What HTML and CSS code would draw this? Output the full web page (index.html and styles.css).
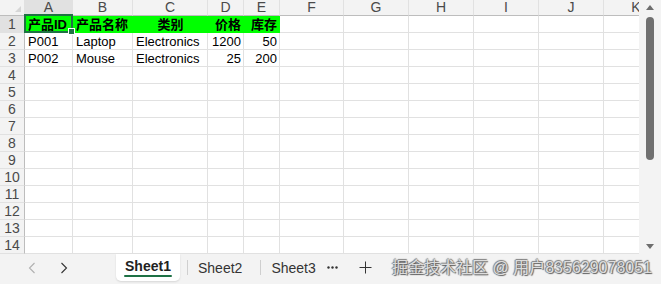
FILE: index.html
```html
<!DOCTYPE html>
<html lang="zh">
<head>
    <meta charset="UTF-8">
    <title>产品表 - Sheet1</title>
    <link rel="stylesheet" href="styles.css">
</head>
<body>
    <div class="app">
        <div class="main">
            <div class="grid-wrap">
                <table class="sheet">
                    <colgroup>
                        <col class="c-row"><col class="c-a"><col class="c-b"><col class="c-c"><col class="c-d"><col class="c-e"><col class="c-f"><col class="c-w"><col class="c-w"><col class="c-w"><col class="c-w"><col class="c-w">
                    </colgroup>
                    <thead>
                        <tr><th class="corner"><span class="corner-tri"></span></th><th class="sel">A</th><th>B</th><th>C</th><th>D</th><th>E</th><th>F</th><th>G</th><th>H</th><th>I</th><th>J</th><th>K</th></tr>
                    </thead>
                    <tbody>
                        <tr><th class="sel">1</th><td class="hd active">产品ID</td><td class="hd">产品名称</td><td class="hd center">类别</td><td class="hd num">价格</td><td class="hd num">库存</td><td></td><td></td><td></td><td></td><td></td><td></td></tr>
                        <tr><th>2</th><td>P001</td><td>Laptop</td><td>Electronics</td><td class="num">1200</td><td class="num">50</td><td></td><td></td><td></td><td></td><td></td><td></td></tr>
                        <tr><th>3</th><td>P002</td><td>Mouse</td><td>Electronics</td><td class="num">25</td><td class="num">200</td><td></td><td></td><td></td><td></td><td></td><td></td></tr>
                        <tr><th>4</th><td></td><td></td><td></td><td></td><td></td><td></td><td></td><td></td><td></td><td></td><td></td></tr>
                        <tr><th>5</th><td></td><td></td><td></td><td></td><td></td><td></td><td></td><td></td><td></td><td></td><td></td></tr>
                        <tr><th>6</th><td></td><td></td><td></td><td></td><td></td><td></td><td></td><td></td><td></td><td></td><td></td></tr>
                        <tr><th>7</th><td></td><td></td><td></td><td></td><td></td><td></td><td></td><td></td><td></td><td></td><td></td></tr>
                        <tr><th>8</th><td></td><td></td><td></td><td></td><td></td><td></td><td></td><td></td><td></td><td></td><td></td></tr>
                        <tr><th>9</th><td></td><td></td><td></td><td></td><td></td><td></td><td></td><td></td><td></td><td></td><td></td></tr>
                        <tr><th>10</th><td></td><td></td><td></td><td></td><td></td><td></td><td></td><td></td><td></td><td></td><td></td></tr>
                        <tr><th>11</th><td></td><td></td><td></td><td></td><td></td><td></td><td></td><td></td><td></td><td></td><td></td></tr>
                        <tr><th>12</th><td></td><td></td><td></td><td></td><td></td><td></td><td></td><td></td><td></td><td></td><td></td></tr>
                        <tr><th>13</th><td></td><td></td><td></td><td></td><td></td><td></td><td></td><td></td><td></td><td></td><td></td></tr>
                        <tr><th>14</th><td></td><td></td><td></td><td></td><td></td><td></td><td></td><td></td><td></td><td></td><td></td></tr>
                    </tbody>
                </table>
            </div>
            <div class="vscroll">
                <span class="arrow-up"></span>
                <span class="thumb"></span>
                <span class="arrow-down"></span>
            </div>
        </div>

        <div class="tabbar">
            <div class="nav">
                <span class="nav-btn disabled">
                    <svg width="8" height="12" viewBox="0 0 8 12"><path d="M6.5 1 L1.5 6 L6.5 11" fill="none" stroke="currentColor" stroke-width="1.1"/></svg>
                </span>
                <span class="nav-btn">
                    <svg width="8" height="12" viewBox="0 0 8 12"><path d="M1.5 1 L6.5 6 L1.5 11" fill="none" stroke="currentColor" stroke-width="1.1"/></svg>
                </span>
            </div>
            <div class="tab active">Sheet1</div>
            <span class="sep"></span>
            <div class="tab">Sheet2</div>
            <span class="sep"></span>
            <div class="tab">Sheet3</div>
            <span class="more">
                <svg width="11" height="3" viewBox="0 0 11 3"><circle cx="1.5" cy="1.5" r="1.2" fill="#333"/><circle cx="5.5" cy="1.5" r="1.2" fill="#333"/><circle cx="9.5" cy="1.5" r="1.2" fill="#333"/></svg>
            </span>
            <span class="add">
                <svg width="13" height="13" viewBox="0 0 13 13"><path d="M6.5 0.5 V12.5 M0.5 6.5 H12.5" stroke="#333" stroke-width="1"/></svg>
            </span>
            <div class="watermark">掘金技术社区 @ 用户835629078051</div>
        </div>
    </div>
</body>
</html>
```

FILE: styles.css
```css
body {
    margin: 0;
    padding: 0;
    background: #fff;
    font-family: "Liberation Sans", Arial, "Noto Sans CJK SC", sans-serif;
    overflow: hidden;
}

.app {
    width: 661px;
    height: 284px;
    display: flex;
    flex-direction: column;
    position: relative;
}

.main {
    display: flex;
    height: 254px;
}

.grid-wrap {
    width: 639px;
    height: 254px;
    overflow: hidden;
}

.vscroll {
    width: 22px;
    background: #f3f3f3;
    position: relative;
    display: flex;
    flex-direction: column;
    align-items: center;
}

.arrow-up {
    margin-top: 5px;
    width: 0;
    height: 0;
    border-left: 4px solid transparent;
    border-right: 4px solid transparent;
    border-bottom: 5px solid #6e6e6e;
}

.thumb {
    margin-top: 7px;
    width: 8px;
    height: 143px;
    border-radius: 4px;
    background: #707070;
}

.arrow-down {
    margin-top: auto;
    margin-bottom: 5px;
    width: 0;
    height: 0;
    border-left: 4px solid transparent;
    border-right: 4px solid transparent;
    border-top: 5px solid #6e6e6e;
}

/* grid */

.sheet {
    border-collapse: separate;
    border-spacing: 0;
    table-layout: fixed;
    width: 669px;
    font-size: 13px;
    color: #000;
}

.c-row { width: 25px; }
.c-a { width: 48px; }
.c-b { width: 60px; }
.c-c { width: 75px; }
.c-d { width: 36px; }
.c-e { width: 36px; }
.c-f { width: 64px; }
.c-w { width: 65px; }

thead tr { height: 16px; }
tbody tr { height: 17px; }

th {
    background: #f3f3f3;
    color: #4a4a4a;
    font-weight: normal;
    font-size: 14px;
    line-height: 15px;
    padding: 0;
    text-align: center;
    border-right: 1px solid #e1e1e1;
    border-bottom: 1px solid #e1e1e1;
}

thead th {
    border-bottom: 1px solid #bdbdbd;
}

tbody th {
    border-right: 1px solid #bdbdbd;
    line-height: 16px;
}

th.sel {
    background: #e1e1e1;
}

thead th.sel {
    border-bottom-color: #9a9a9a;
}

tbody th.sel {
    border-right-color: #9a9a9a;
}

.corner {
    position: relative;
}

.corner-tri {
    position: absolute;
    right: 3px;
    bottom: 3px;
    width: 0;
    height: 0;
    border-left: 6px solid transparent;
    border-bottom: 6px solid #d6d6d6;
}

td {
    padding: 1px 2px 0 3px;
    line-height: 15px;
    white-space: nowrap;
    overflow: hidden;
    border-right: 1px solid #e1e1e1;
    border-bottom: 1px solid #e1e1e1;
}

td.hd {
    background: #00ff00;
    font-weight: bold;
    border-right-color: #00ff00;
    border-bottom-color: #00ff00;
}

td.center { text-align: center; }
td.num { text-align: right; }

td.active {
    position: relative;
    overflow: visible;
}

td.active::after {
    content: "";
    position: absolute;
    top: -2px;
    left: -1px;
    right: -1px;
    bottom: -1px;
    border: 2px solid #1f7244;
}

td.active::before {
    content: "";
    position: absolute;
    right: -3px;
    bottom: -3px;
    width: 5px;
    height: 5px;
    background: #1f7244;
    border: 1px solid #fff;
    z-index: 2;
}

/* sheet tabs */

.tabbar {
    flex: 1;
    display: flex;
    align-items: stretch;
    background: #f3f3f3;
    position: relative;
    font-size: 14px;
    color: #333;
}

.nav {
    display: flex;
    padding-left: 16px;
    margin-right: 36px;
}

.nav-btn {
    width: 32px;
    display: flex;
    align-items: center;
    justify-content: center;
    color: #333;
    padding-bottom: 3px;
}

.nav-btn.disabled {
    color: #b0b0b0;
}

.tab {
    display: flex;
    align-items: center;
    padding: 0 10px 3px;
    white-space: nowrap;
}

.tab.active {
    width: 64px;
    box-sizing: border-box;
    justify-content: center;
    padding: 0 0 3px;
    margin-bottom: 3px;
    background: #fff;
    border-radius: 0 0 5px 5px;
    box-shadow: 0 1px 2px rgba(0, 0, 0, 0.12);
    font-weight: bold;
    color: #222;
    position: relative;
}

.tab.active::after {
    content: "";
    position: absolute;
    left: 8px;
    right: 8px;
    bottom: 4px;
    height: 2px;
    border-radius: 1px;
    background: #1e7145;
}

.sep {
    width: 1px;
    height: 15px;
    align-self: center;
    background: #cfcfcf;
    margin: 0 0 3px 7px;
}

.sep + .tab {
    padding-left: 10px;
    padding-right: 11px;
}

.more {
    display: flex;
    align-items: center;
    padding-bottom: 3px;
}

.add {
    display: flex;
    align-items: center;
    margin-left: 21px;
    padding-bottom: 3px;
}

.watermark {
    position: absolute;
    right: 9px;
    top: 4px;
    font-size: 16px;
    line-height: 20px;
    color: rgba(235, 235, 235, 0.9);
    text-shadow: 1px 1px 1px #5a5a5a, -1px 0 1px #7a7a7a, 0 -1px 1px #7a7a7a;
    white-space: nowrap;
}
```
